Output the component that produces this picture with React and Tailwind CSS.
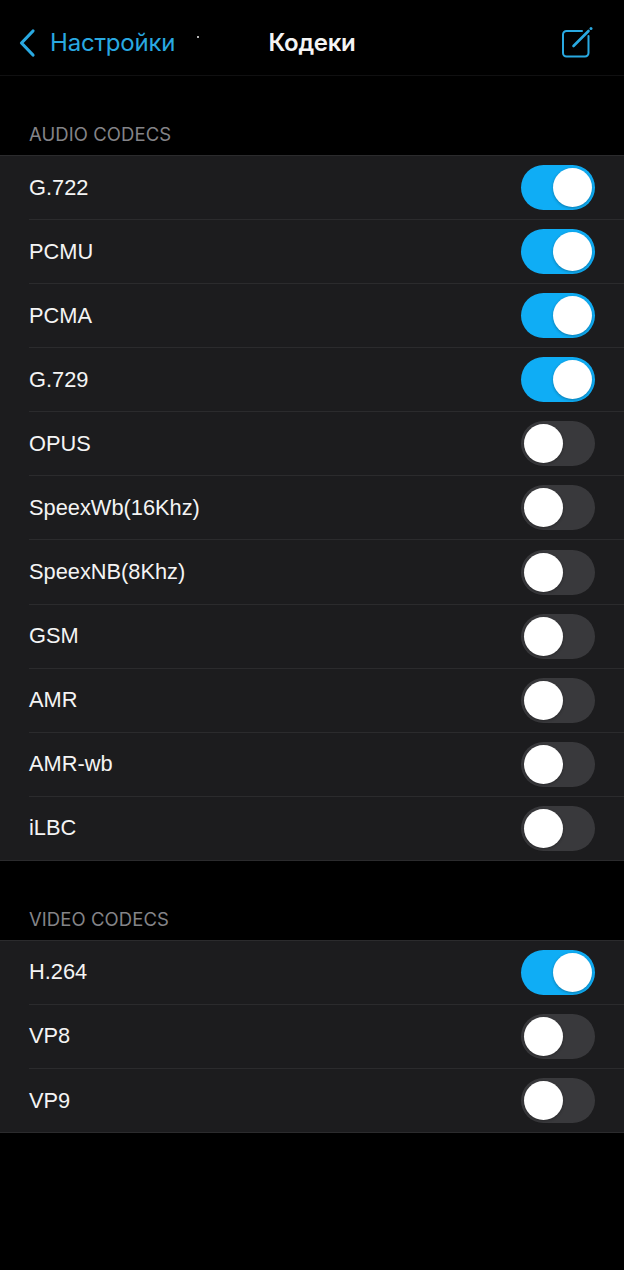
import { useState } from "react";

const audioCodecs = [
  { name: "G.722", on: true },
  { name: "PCMU", on: true },
  { name: "PCMA", on: true },
  { name: "G.729", on: true },
  { name: "OPUS", on: false },
  { name: "SpeexWb(16Khz)", on: false },
  { name: "SpeexNB(8Khz)", on: false },
  { name: "GSM", on: false },
  { name: "AMR", on: false },
  { name: "AMR-wb", on: false },
  { name: "iLBC", on: false },
];

const videoCodecs = [
  { name: "H.264", on: true },
  { name: "VP8", on: false },
  { name: "VP9", on: false },
];

function Toggle({ label, initial }) {
  const [on, setOn] = useState(initial);

  return (
    <button
      type="button"
      role="switch"
      aria-checked={on}
      aria-label={label}
      onClick={() => setOn(!on)}
      className={`flex h-[45px] w-[74px] items-center rounded-full px-[3px] ${
        on ? "justify-end bg-[#0fadf5]" : "justify-start bg-[#39393c]"
      }`}
    >
      <span className="size-[39px] rounded-full bg-white shadow-[0_1px_3px_rgba(0,0,0,0.3)]" />
    </button>
  );
}

function CodecSection({ title, codecs }) {
  return (
    <section>
      <h2 className="flex h-[79px] items-end pb-[9px] pl-[29px] font-['Inter',sans-serif] text-[18.5px] leading-6 tracking-[0.07px] text-[#848488]">
        {title}
      </h2>
      <ul className="border-y border-[#2b2b2d] bg-[#1c1c1e] pl-[29px]">
        {codecs.map((codec, i) => (
          <li
            key={codec.name}
            className={`flex items-center justify-between pr-[29px] ${
              i > 0 ? "h-[64.09px] border-t border-[#2b2b2d]" : "h-[63.09px]"
            }`}
          >
            <span className="text-[21.8px] leading-7 text-[#f4f4f4]">{codec.name}</span>
            <Toggle label={codec.name} initial={codec.on} />
          </li>
        ))}
      </ul>
    </section>
  );
}

export default function App() {
  return (
    <div className="min-h-[1270px] w-full bg-black font-['Liberation_Sans',Arial,sans-serif]">
      <header className="grid h-[76px] grid-cols-[1fr_auto_1fr] items-center border-b border-[#101011] pt-[11px] font-['Inter',sans-serif] text-[24px] leading-8">
        <div className="flex items-center pl-[18px] text-[#29a9e1]">
          <svg className="h-[30px] w-[19px]" viewBox="0 0 19 30" fill="none">
            <path
              d="M15 3 3.500 15 15 27"
              stroke="currentColor"
              strokeWidth="3.2"
              strokeLinecap="round"
              strokeLinejoin="round"
            />
          </svg>
          <span className="ml-[13px] tracking-[-0.2px]">Настройки</span>
          <span className="mb-[13px] ml-[22px] size-[2px] bg-[#b5b5b5]" />
        </div>
        <h1 className="font-semibold tracking-[-0.3px] text-[#f4f4f4]">Кодеки</h1>
        <div className="flex justify-end pr-[30px]">
          <svg className="h-[34px] w-[34px] text-[#29a9e1]" viewBox="0 0 34 34" fill="none">
            <path
              d="M22 5H6.500A3.500 3.500 0 0 0 3 8.500V27A3.500 3.500 0 0 0 6.500 30.500H25A3.500 3.500 0 0 0 28.500 27V10"
              stroke="currentColor"
              strokeWidth="2"
              strokeLinecap="round"
            />
            <path d="M13.500 20 28.500 5" stroke="currentColor" strokeWidth="2.600" strokeLinecap="round" />
            <circle cx="31" cy="2.600" r="1.500" fill="currentColor" />
          </svg>
        </div>
      </header>
      <main>
        <CodecSection title="AUDIO CODECS" codecs={audioCodecs} />
        <CodecSection title="VIDEO CODECS" codecs={videoCodecs} />
      </main>
    </div>
  );
}
